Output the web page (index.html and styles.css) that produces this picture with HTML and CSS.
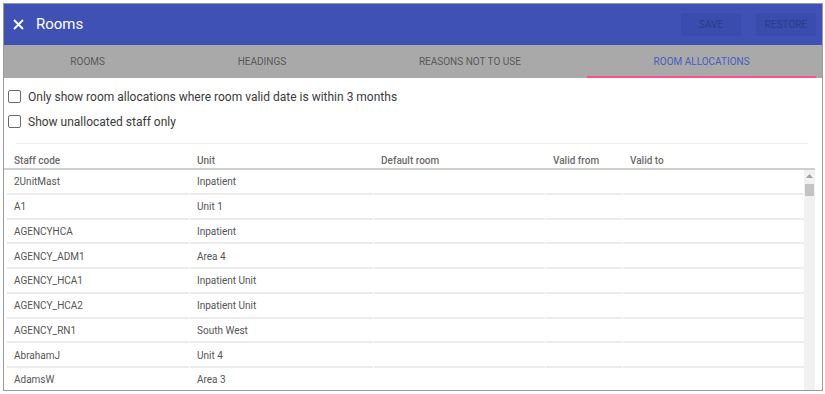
FILE: index.html
```html
<!DOCTYPE html>
<html>
<head>
<meta charset="utf-8">
<link rel="stylesheet" href="styles.css">
</head>
<body>
<div class="dialog">
  <header class="topbar">
    <svg class="close" width="11" height="11" viewBox="0 0 11 11"><path d="M1 1L10 10M10 1L1 10" stroke="#fff" stroke-width="1.8" fill="none"/></svg>
    <span class="title">Rooms</span>
    <span class="spacer"></span>
    <button class="btn">SAVE</button>
    <button class="btn">RESTORE</button>
  </header>
  <nav class="tabs">
    <div class="tab">ROOMS</div>
    <div class="tab">HEADINGS</div>
    <div class="tab">REASONS NOT TO USE</div>
    <div class="tab active">ROOM ALLOCATIONS</div>
  </nav>
  <section class="content">
    <label class="check"><span class="box"></span>Only show room allocations where room valid date is within 3 months</label>
    <label class="check"><span class="box"></span>Show unallocated staff only</label>
    <div class="rule"></div>
    <div class="grid head">
      <div class="cell">Staff code</div>
      <div class="cell">Unit</div>
      <div class="cell">Default room</div>
      <div class="cell">Valid from</div>
      <div class="cell">Valid to</div>
    </div>
    <div class="body">
      <div class="rows">
        <div class="grid row"><div class="cell">2UnitMast</div><div class="cell">Inpatient</div><div class="cell"></div><div class="cell"></div><div class="cell"></div></div>
        <div class="grid row"><div class="cell">A1</div><div class="cell">Unit 1</div><div class="cell"></div><div class="cell"></div><div class="cell"></div></div>
        <div class="grid row"><div class="cell">AGENCYHCA</div><div class="cell">Inpatient</div><div class="cell"></div><div class="cell"></div><div class="cell"></div></div>
        <div class="grid row"><div class="cell">AGENCY_ADM1</div><div class="cell">Area 4</div><div class="cell"></div><div class="cell"></div><div class="cell"></div></div>
        <div class="grid row"><div class="cell">AGENCY_HCA1</div><div class="cell">Inpatient Unit</div><div class="cell"></div><div class="cell"></div><div class="cell"></div></div>
        <div class="grid row"><div class="cell">AGENCY_HCA2</div><div class="cell">Inpatient Unit</div><div class="cell"></div><div class="cell"></div><div class="cell"></div></div>
        <div class="grid row"><div class="cell">AGENCY_RN1</div><div class="cell">South West</div><div class="cell"></div><div class="cell"></div><div class="cell"></div></div>
        <div class="grid row"><div class="cell">AbrahamJ</div><div class="cell">Unit 4</div><div class="cell"></div><div class="cell"></div><div class="cell"></div></div>
        <div class="grid row"><div class="cell">AdamsW</div><div class="cell">Area 3</div><div class="cell"></div><div class="cell"></div><div class="cell"></div></div>
      </div>
      <div class="scrollbar">
        <svg class="arrow" width="7" height="4" viewBox="0 0 7 4"><path d="M0 4L3.5 0L7 4Z" fill="#a3a3a3"/></svg>
        <div class="thumb"></div>
      </div>
    </div>
  </section>
</div>
</body>
</html>
```

FILE: styles.css
```css
* { box-sizing: border-box; }
html, body { margin: 0; padding: 0; background: #fff; }
body { font-family: Roboto, "Liberation Sans", Arial, sans-serif; }

.dialog {
  margin: 3px 0 0 3px;
  width: 820px;
  height: 388px;
  border: 1px solid #9a9a9a;
  display: flex;
  flex-direction: column;
  overflow: hidden;
}

.topbar {
  height: 41px;
  flex: none;
  background: #3f51b5;
  display: flex;
  align-items: center;
  padding: 0 6px 0 9px;
}
.close { display: block; margin-right: 12px; margin-top: 0; }
.title { color: #fff; font-size: 15px; margin-top: -2px; }
.spacer { flex: 1; }
.btn {
  width: 60px;
  height: 23px;
  margin-left: 15px;
  border: none;
  border-radius: 1px;
  background: #3a4cad;
  color: #2c3b8c;
  font-family: Roboto, "Liberation Sans", Arial, sans-serif;
  font-size: 10px;
  padding: 0;
  margin-top: -1px;
}

.tabs {
  height: 33px;
  flex: none;
  background: #a9a9a9;
  display: flex;
  padding-right: 6px;
}
.tab {
  flex: 1 1 auto;
  display: flex;
  align-items: center;
  justify-content: center;
  font-size: 10px;
  color: #595959;
  border-bottom: 2px solid transparent;
  padding-top: 1px;
}
.tab.active { color: #4a5cc0; border-bottom-color: #ff4f86; }

.content {
  flex: 1;
  display: flex;
  flex-direction: column;
  min-height: 0;
  padding: 6px 0 0 3px;
}

.check {
  display: flex;
  align-items: center;
  height: 25px;
  font-size: 12px;
  color: #3a3a3a;
}
.box {
  width: 13px;
  height: 13px;
  border: 1.5px solid #6a6a6a;
  border-radius: 2px;
  margin-right: 7px;
  margin-left: 1px;
}

.rule {
  height: 1px;
  background: #ececec;
  margin: 9px 14px 0 9px;
}

.grid {
  display: grid;
  grid-template-columns: 182px 183px 171px 76px 183px;
  column-gap: 1px;
}

.head {
  height: 26px;
  border-bottom: 2px solid #cfcfcf;
  width: 811px;
  margin-left: -3px;
  padding-left: 3px;
  font-size: 10px;
  font-weight: 500;
  color: #6b6b6b;
  align-items: end;
}
.head .cell { padding: 0 0 2px 7px; }

.body {
  flex: 1;
  min-height: 0;
  display: flex;
  width: 811px;
  margin-left: -3px;
}
.rows {
  width: 800px;
  overflow: hidden;
  padding-left: 3px;
}
.scrollbar {
  width: 11px;
  background: #f1f1f1;
  display: flex;
  flex-direction: column;
  align-items: center;
  padding-top: 4px;
}
.arrow { display: block; }
.thumb {
  margin-top: 6px;
  width: 9px;
  height: 12px;
  background: #c3c3c3;
}

.row { height: 24.75px; }
.row .cell {
  border-bottom: 2px solid #ececec;
  font-size: 10px;
  color: #555;
  padding: 1px 0 0 7px;
  display: flex;
  align-items: center;
}
```
